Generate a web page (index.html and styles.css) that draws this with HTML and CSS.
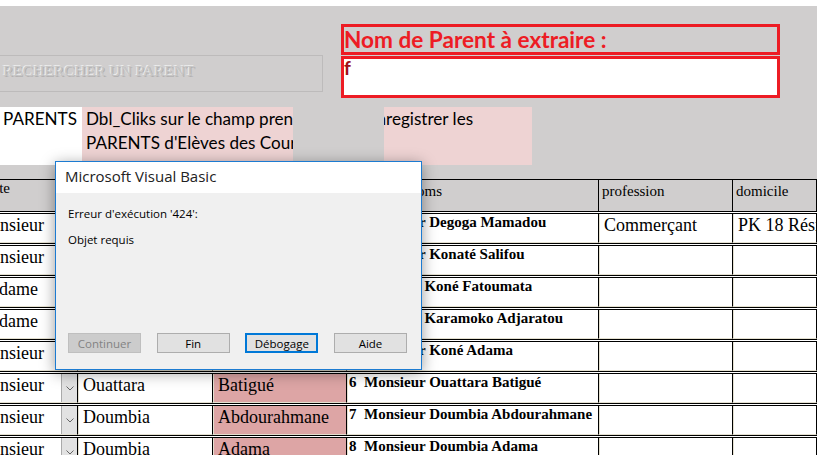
FILE: index.html
```html
<!DOCTYPE html>
<html>
  <head>
    <meta charset="UTF-8" />
    <title>Extraire un parent</title>
    <link rel="stylesheet" href="styles.css">
  </head>
  <body>
    <div class="strip"></div>
    <div class="top">
      <div class="band">
        <div class="search">RECHERCHER UN PARENT</div>
        <div class="extract">
          <div class="extract-title">Nom de Parent à extraire :</div>
          <div class="extract-input">f</div>
        </div>
      </div>
      <div class="info">
        <div class="info-label">PARENTS</div>
        <div class="info-note">
          Dbl_Cliks sur le champ prenom pour l'enregistrer les PARENTS d'Elèves des Cours du soir
          <div class="info-mask"></div>
        </div>
      </div>
    </div>

    <div class="grid">
      <div class="row head">
        <div class="cell civ"><span class="civ-text">Civilite</span></div>
        <div class="cell">Nom</div>
        <div class="cell">Prénom</div>
        <div class="cell">Noms Prénoms</div>
        <div class="cell">profession</div>
        <div class="cell">domicile</div>
      </div>
      <div class="row">
        <div class="cell civ"><span class="civ-text">Monsieur</span><span class="drop"><svg width="8" height="5" viewBox="0 0 8 5"><path d="M0.5 0.5 L4 4 L7.5 0.5" fill="none" stroke="#666"/></svg></span></div>
        <div class="cell">Degoga</div>
        <div class="cell pink">Mamadou</div>
        <div class="cell full">1  Monsieur Degoga Mamadou</div>
        <div class="cell">Commerçant</div>
        <div class="cell">PK 18 Résidentiel</div>
      </div>
      <div class="row">
        <div class="cell civ"><span class="civ-text">Monsieur</span><span class="drop"><svg width="8" height="5" viewBox="0 0 8 5"><path d="M0.5 0.5 L4 4 L7.5 0.5" fill="none" stroke="#666"/></svg></span></div>
        <div class="cell">Konaté</div>
        <div class="cell pink">Salifou</div>
        <div class="cell full">2  Monsieur Konaté Salifou</div>
        <div class="cell"></div>
        <div class="cell"></div>
      </div>
      <div class="row">
        <div class="cell civ"><span class="civ-text">Madame</span><span class="drop"><svg width="8" height="5" viewBox="0 0 8 5"><path d="M0.5 0.5 L4 4 L7.5 0.5" fill="none" stroke="#666"/></svg></span></div>
        <div class="cell">Koné</div>
        <div class="cell pink">Fatoumata</div>
        <div class="cell full">3  Madame Koné Fatoumata</div>
        <div class="cell"></div>
        <div class="cell"></div>
      </div>
      <div class="row">
        <div class="cell civ"><span class="civ-text">Madame</span><span class="drop"><svg width="8" height="5" viewBox="0 0 8 5"><path d="M0.5 0.5 L4 4 L7.5 0.5" fill="none" stroke="#666"/></svg></span></div>
        <div class="cell">Karamoko</div>
        <div class="cell pink">Adjaratou</div>
        <div class="cell full">4  Madame Karamoko Adjaratou</div>
        <div class="cell"></div>
        <div class="cell"></div>
      </div>
      <div class="row">
        <div class="cell civ"><span class="civ-text">Monsieur</span><span class="drop"><svg width="8" height="5" viewBox="0 0 8 5"><path d="M0.5 0.5 L4 4 L7.5 0.5" fill="none" stroke="#666"/></svg></span></div>
        <div class="cell">Koné</div>
        <div class="cell pink">Adama</div>
        <div class="cell full">5  Monsieur Koné Adama</div>
        <div class="cell"></div>
        <div class="cell"></div>
      </div>
      <div class="row">
        <div class="cell civ"><span class="civ-text">Monsieur</span><span class="drop"><svg width="8" height="5" viewBox="0 0 8 5"><path d="M0.5 0.5 L4 4 L7.5 0.5" fill="none" stroke="#666"/></svg></span></div>
        <div class="cell">Ouattara</div>
        <div class="cell pink">Batigué</div>
        <div class="cell full">6  Monsieur Ouattara Batigué</div>
        <div class="cell"></div>
        <div class="cell"></div>
      </div>
      <div class="row">
        <div class="cell civ"><span class="civ-text">Monsieur</span><span class="drop"><svg width="8" height="5" viewBox="0 0 8 5"><path d="M0.5 0.5 L4 4 L7.5 0.5" fill="none" stroke="#666"/></svg></span></div>
        <div class="cell">Doumbia</div>
        <div class="cell pink">Abdourahmane</div>
        <div class="cell full">7  Monsieur Doumbia Abdourahmane</div>
        <div class="cell"></div>
        <div class="cell"></div>
      </div>
      <div class="row">
        <div class="cell civ"><span class="civ-text">Monsieur</span><span class="drop"><svg width="8" height="5" viewBox="0 0 8 5"><path d="M0.5 0.5 L4 4 L7.5 0.5" fill="none" stroke="#666"/></svg></span></div>
        <div class="cell">Doumbia</div>
        <div class="cell pink">Adama</div>
        <div class="cell full">8  Monsieur Doumbia Adama</div>
        <div class="cell"></div>
        <div class="cell"></div>
      </div>
    </div>

    <div class="dialog">
      <div class="dialog-title">Microsoft Visual Basic</div>
      <div class="dialog-body">
        <p class="msg">Erreur d'exécution '424':</p>
        <p class="msg second">Objet requis</p>
        <div class="buttons">
          <button class="btn" disabled>Continuer</button>
          <button class="btn">Fin</button>
          <button class="btn default">Débogage</button>
          <button class="btn">Aide</button>
        </div>
      </div>
    </div>
  </body>
</html>
```

FILE: styles.css
```css
* {
  margin: 0;
  padding: 0;
  box-sizing: border-box;
}
body {
  width: 817px;
  height: 455px;
  overflow: hidden;
  position: relative;
  background-color: #d0cece;
  font-family: "Liberation Serif", serif;
}
.strip {
  height: 6px;
  background-color: #fff;
}
.top {
  height: 173px;
  padding-top: 18px;
}
.band {
  display: flex;
  height: 74px;
}
.search {
  width: 323px;
  height: 37px;
  margin-top: 31px;
  border: 1px solid #bdbbbb;
  border-left: none;
  padding: 6px 0 0 3px;
  font-size: 15.5px;
  color: #c6c6c6;
  text-shadow: -1px -1px 0 #ececec, 1px 1px 0 #b3b1b1;
}
.extract {
  width: 439px;
  margin-left: 18px;
  font-family: "Lato", sans-serif;
}
.extract-title {
  height: 31px;
  border: 3px solid #ed1c24;
  font-size: 22.6px;
  font-weight: bold;
  line-height: 25px;
  color: #ed1c24;
}
.extract-input {
  height: 42px;
  margin-top: 1px;
  border: 3px solid #ed1c24;
  background-color: #fff;
  font-size: 19px;
  font-weight: bold;
  line-height: 18px;
  color: #9e1016;
}
.info {
  display: flex;
  height: 58px;
  margin-top: 9px;
  font-family: "Lato", sans-serif;
  font-size: 17.1px;
  line-height: 23.5px;
}
.info-label {
  width: 82px;
  padding-left: 3px;
  background-color: #fff;
}
.info-note {
  position: relative;
  width: 450px;
  padding-left: 4px;
  background-color: #eed3d3;
}
.info-mask {
  position: absolute;
  top: 0;
  left: 211px;
  width: 91px;
  height: 100%;
  background-color: #d0cece;
}

/* datasheet */
.grid {
  margin-left: -40px;
  background-color: #fff;
}
.row {
  display: grid;
  grid-template-columns: 118px 135px 134px 252px 134px 1fr;
  height: 31px;
  margin-bottom: 1px;
  border-top: 1px solid #000;
  border-bottom: 1px solid #000;
}
.row.head {
  height: 33px;
  background-color: #d0cece;
}
.cell {
  border-right: 1px solid #000;
  border-left: 1px solid #e4e0d0;
  border-bottom: 1px solid #e4e0d0;
  padding: 1px 0 0 4px;
  font-size: 18px;
  white-space: pre;
  overflow: hidden;
}
.head .cell {
  border-left: none;
  border-bottom: none;
  padding: 3px 0 0 3px;
  font-size: 15px;
}
.cell.pink {
  background-color: #dda5a5;
}
.cell.full {
  padding: 0 0 0 1px;
  font-size: 15px;
  font-weight: bold;
}
.cell.civ {
  display: flex;
  padding: 0;
}
.civ-text {
  flex: 1;
  padding: 1px 0 0 14px;
}
.head .civ-text {
  padding: 0 0 0 5px;
}
.drop {
  width: 16px;
  display: flex;
  align-items: center;
  justify-content: center;
  background-color: #e2e2e2;
  border-left: 1px solid #aaa;
}

/* error box */
.dialog {
  position: absolute;
  left: 55px;
  top: 161px;
  width: 367px;
  height: 209px;
  border: 1px solid #1c7bd1;
  background-color: #f0f0f0;
  box-shadow: 0 3px 14px rgba(0, 0, 0, 0.4);
  font-family: "Open Sans", sans-serif;
  color: #000;
}
.dialog-title {
  height: 31px;
  padding: 4px 0 0 9px;
  background-color: #fff;
  font-size: 15px;
  color: #222;
}
.dialog-body {
  padding: 13px 14px 0 12px;
}
.msg {
  font-size: 11.5px;
  line-height: 16px;
}
.msg.second {
  margin-top: 10px;
}
.buttons {
  display: flex;
  justify-content: space-between;
  margin-top: 85px;
}
.btn {
  width: 73px;
  height: 20px;
  border: 1px solid #adadad;
  background-color: #e1e1e1;
  font-family: "Open Sans", sans-serif;
  font-size: 11.5px;
  color: #000;
}
.btn:disabled {
  border-color: #bfbfbf;
  background-color: #cccccc;
  color: #838383;
}
.btn.default {
  border: 2px solid #0078d7;
}
```
